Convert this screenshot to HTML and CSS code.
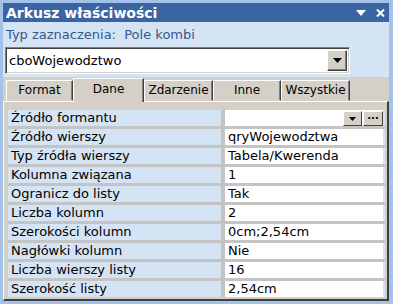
FILE: index.html
```html
<!DOCTYPE html>
<html lang="pl">
<head>
    <meta charset="UTF-8">
    <title>Arkusz właściwości</title>
    <link rel="stylesheet" href="styles.css">
</head>
<body>
    <div class="sheet">
        <div class="titlebar">
            <span class="title">Arkusz właściwości</span>
            <span class="tb-icons">
                <svg width="10" height="6" viewBox="0 0 10 6"><path d="M0 0 H10 L5 6 Z" fill="#fff"/></svg>
                <svg width="9" height="8" viewBox="0 0 9 8"><path d="M1 0.5 L8 7.5 M8 0.5 L1 7.5" stroke="#fff" stroke-width="2"/></svg>
            </span>
        </div>

        <div class="head">
            <div class="sel-type">Typ zaznaczenia:&nbsp; Pole kombi</div>
            <div class="combo">
                <span class="combo-text">cboWojewodztwo</span>
                <span class="combo-btn">
                    <svg width="9" height="5" viewBox="0 0 9 5"><path d="M0 0 H9 L4.5 5 Z" fill="#000"/></svg>
                </span>
            </div>
        </div>

        <div class="panel">
            <div class="tabs">
                <div class="tab tab-format">Format</div>
                <div class="tab tab-dane active">Dane</div>
                <div class="tab tab-zdarzenie">Zdarzenie</div>
                <div class="tab tab-inne">Inne</div>
                <div class="tab tab-wszystkie">Wszystkie</div>
            </div>
            <div class="page">
                <div class="props">
                    <div class="row">
                        <div class="name">Źródło formantu</div>
                        <div class="value has-btns">
                            <span></span>
                            <span class="btns">
                                <span class="mini-btn">
                                    <svg width="7" height="4" viewBox="0 0 7 4"><path d="M0 0 H7 L3.5 4 Z" fill="#000"/></svg>
                                </span>
                                <span class="mini-btn dots">...</span>
                            </span>
                        </div>
                    </div>
                    <div class="row"><div class="name">Źródło wierszy</div><div class="value">qryWojewodztwa</div></div>
                    <div class="row"><div class="name">Typ źródła wierszy</div><div class="value">Tabela/Kwerenda</div></div>
                    <div class="row"><div class="name">Kolumna związana</div><div class="value">1</div></div>
                    <div class="row"><div class="name">Ogranicz do listy</div><div class="value">Tak</div></div>
                    <div class="row"><div class="name">Liczba kolumn</div><div class="value">2</div></div>
                    <div class="row"><div class="name">Szerokości kolumn</div><div class="value">0cm;2,54cm</div></div>
                    <div class="row"><div class="name">Nagłówki kolumn</div><div class="value">Nie</div></div>
                    <div class="row"><div class="name">Liczba wierszy listy</div><div class="value">16</div></div>
                    <div class="row"><div class="name">Szerokość listy</div><div class="value">2,54cm</div></div>
                </div>
            </div>
        </div>
    </div>
</body>
</html>
```

FILE: styles.css
```css
* { margin: 0; padding: 0; box-sizing: border-box; }
body {
    font-family: "DejaVu Sans", "Liberation Sans", sans-serif;
    font-size: 13px;
    color: #000;
    background: #a3c2ea;
}
.sheet {
    width: 393px;
    height: 304px;
    padding: 3px 4px 3px 3px;
    background: #a3c2ea;
}
.titlebar {
    height: 19px;
    background: #3a64a2;
    color: #fff;
    display: flex;
    align-items: center;
    justify-content: space-between;
    padding: 0 4px 0 3px;
}
.title {
    font-weight: bold;
    font-size: 14px;
}
.tb-icons {
    display: flex;
    align-items: center;
    gap: 10px;
}
.head {
    height: 55px;
    background: #d5e4f5;
    padding: 4px 0 3px 2px;
}
.sel-type {
    height: 17px;
    line-height: 17px;
    margin-bottom: 4px;
    padding-left: 1px;
    color: #34588c;
}
.combo {
    width: 345px;
    height: 27px;
    background: #fff;
    border: 1px solid;
    border-color: #808080 #fff #fff #808080;
    box-shadow: inset 1px 1px 0 #404040, inset -1px -1px 0 #d4d0c8;
    display: flex;
    align-items: center;
    justify-content: space-between;
    padding: 2px 2px 2px 3px;
}
.combo-btn {
    width: 20px;
    height: 21px;
    background: #d4d0c8;
    border: 1px solid;
    border-color: #fff #404040 #404040 #fff;
    box-shadow: inset -1px -1px 0 #808080;
    display: flex;
    align-items: center;
    justify-content: center;
}
.panel {
    background: #d4d0c8;
}
.tabs {
    height: 24px;
    padding: 3px 0 0 3px;
    display: flex;
    align-items: flex-end;
    position: relative;
    z-index: 1;
    font-size: 12px;
}
.tab {
    height: 21px;
    line-height: 19px;
    text-align: center;
    border: 1px solid;
    border-color: #fff #404040 transparent #fff;
    box-shadow: inset -1px 0 0 #808080;
    background: #d4d0c8;
}
.tab.active {
    height: 24px;
    line-height: 20px;
    margin-bottom: -1px;
    border-bottom: none;
}
.tab-format { width: 67px; }
.tab-dane { width: 71px; }
.tab-zdarzenie { width: 69px; }
.tab-inne { width: 68px; }
.tab-wszystkie { width: 69px; }
.page {
    height: 200px;
    border: 1px solid;
    border-color: #fff #404040 #404040 #fff;
    border-right-width: 2px;
    border-bottom-width: 2px;
    padding: 8px 2px 2px 4px;
}
.props {
    background: #c4c4c4;
    display: flex;
    flex-direction: column;
    gap: 3px;
}
.row {
    display: flex;
    height: 16px;
    line-height: 16px;
    background: #d5e4f5;
}
.name {
    width: 213px;
    padding-left: 3px;
    white-space: nowrap;
}
.value {
    width: 162px;
    background: #fff;
    border-left: 4px solid #c4c4c4;
    padding-left: 3px;
    white-space: nowrap;
}
.has-btns {
    display: flex;
    justify-content: space-between;
    align-items: flex-end;
    padding-left: 0;
}
.btns {
    display: flex;
    gap: 1px;
}
.mini-btn {
    width: 19px;
    height: 15px;
    background: #d4d0c8;
    border: 1px solid;
    border-color: #fff #404040 #404040 #fff;
    display: flex;
    align-items: center;
    justify-content: center;
}
.mini-btn.dots {
    width: 20px;
    font-weight: bold;
    font-size: 10px;
    line-height: 8px;
    align-items: flex-start;
}
```
